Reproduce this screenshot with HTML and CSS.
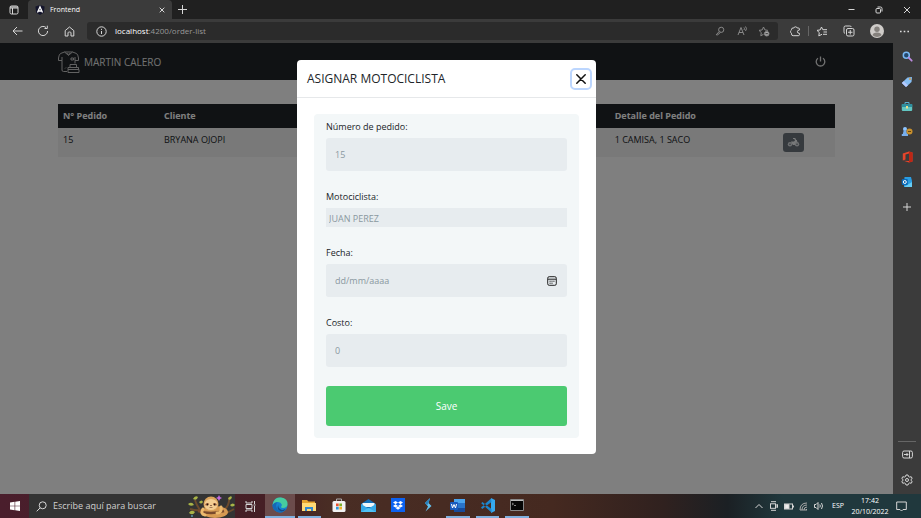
FILE: index.html
```
<!DOCTYPE html>
<html lang="es">
<head>
<meta charset="utf-8">
<title>Frontend</title>
<link rel="stylesheet" href="styles.css">
</head>
<body>
<header class="titlebar">
  <button class="slot slot-28" aria-label="Pestañas"><svg class="icon" width="10" height="10" viewBox="0 0 10 10"><rect x="1" y="1" width="8" height="8" rx="1.5"/><path d="M1 2h8M1 3h8M3.500 3v6"/></svg></button>
  <div class="tab">
    <svg width="10" height="10" viewBox="0 0 10 10"><path d="M5 0l4.600 1.600-.7 6L5 10 1.100 7.600l-.7-6z" fill="#14152b"/><path d="M2.500 7.600L5 1.800l2.500 5.800M3.500 6h3" fill="none" stroke="#fff" stroke-width="1.300"/></svg>
    <span class="tab-title">Frontend</span>
    <button class="slot" aria-label="Cerrar pestaña"><svg class="icon" width="6" height="6" viewBox="0 0 6 6"><path d="M.7.7l4.600 4.600M5.300.7L.7 5.300"/></svg></button>
  </div>
  <button class="slot slot-20" aria-label="Nueva pestaña"><svg class="icon" width="9" height="9" viewBox="0 0 9 9"><path d="M4.500 0v9M0 4.500h9"/></svg></button>
  <div class="window-buttons">
    <button class="slot slot-28" aria-label="Minimizar"><svg class="icon" width="7" height="7" viewBox="0 0 7 7"><path d="M.5 3.500h6"/></svg></button>
    <button class="slot slot-28" aria-label="Restaurar"><svg class="icon" width="8" height="8" viewBox="0 0 8 8"><rect x="1" y="2.500" width="4.500" height="4.500" rx="1"/><path d="M2.500 1h3Q7 1 7 2.500v3"/></svg></button>
    <button class="slot slot-28" aria-label="Cerrar"><svg class="icon" width="8" height="8" viewBox="0 0 8 8"><path d="M1 1l6 6M7 1L1 7"/></svg></button>
  </div>
</header>

<nav class="toolbar" aria-label="Navegación">
  <div class="nav-buttons">
    <button class="slot slot-26" aria-label="Atrás"><svg class="icon" width="11" height="10" viewBox="0 0 11 10"><path d="M10.500 5H1M5 1L1 5l4 4"/></svg></button>
    <button class="slot slot-26" aria-label="Actualizar"><svg class="icon" width="12" height="12" viewBox="0 0 12 12"><path d="M10.600 6A4.600 4.600 0 1 1 9 2.500M10.300.7v2.800H7.500"/></svg></button>
    <button class="slot slot-26" aria-label="Inicio"><svg class="icon" width="11" height="11" viewBox="0 0 11 11"><path d="M1.200 4.600L5.500 1l4.300 3.600V10H7V6.800Q7 6 5.500 6T4 6.800V10H1.200z"/></svg></button>
  </div>
  <div class="address">
    <svg class="icon" width="11" height="11" viewBox="0 0 11 11"><circle cx="5.500" cy="5.500" r="4.700"/><path d="M5.500 5v3M5.500 2.800v1.100"/></svg>
    <span class="url"><b>localhost</b>:4200/order-list</span>
    <button class="slot slot-22 dim" aria-label="Contraseña"><svg class="icon" width="10" height="10" viewBox="0 0 10 10"><circle cx="6.200" cy="3.800" r="2.600"/><path d="M4.200 5.500L1.200 8.800h1.500L5.500 6.400"/></svg></button>
    <button class="slot slot-22 dim" aria-label="Leer en voz alta"><svg class="icon" width="11" height="10" viewBox="0 0 11 10"><path d="M1 9l3-7.500L7 9M2 6.500h4M7 1.500q1 1 0 2.500M8.500.5q2 2 0 4.500"/></svg></button>
    <button class="slot slot-22 dim" aria-label="Agregar a favoritos"><svg class="icon" width="12" height="11" viewBox="0 0 12 11"><path d="M5.500 8.300L2.800 9.800l.5-3.200L1 4.400l3.200-.5L5.500 1l1.400 2.900 3 .5"/><circle cx="8.700" cy="7.700" r="2.300" fill="#aaa"/><path d="M7.500 7.700h2.400" stroke="#333"/></svg></button>
  </div>
  <div class="tools">
    <button class="slot slot-26" aria-label="Extensiones"><svg class="icon" width="11" height="11" viewBox="0 0 11 11"><path d="M9.500 4V3.200Q9.500 2 8.300 2H7.200Q6.800.8 5.500.8T3.800 2H3Q1.500 2 1.500 3.500V4Q.5 4.500.5 5.700T1.500 7.300v.7Q1.500 9.700 3.200 9.700h5.100q1.200 0 1.200-1.200V7.400Q7.400 7.400 7.400 5.700T9.500 4z"/></svg></button>
    <span class="divider"></span>
    <button class="slot slot-26" aria-label="Favoritos"><svg class="icon" width="12" height="11" viewBox="0 0 12 11"><path d="M6 8.300L2.800 9.900l.5-3.300L1 4.400l3.200-.5L5.500 1l1.300 2.700H11M7.500 6H11M7 8.300h4"/></svg></button>
    <button class="slot slot-28" aria-label="Colecciones"><svg class="icon" width="12" height="12" viewBox="0 0 12 12"><rect x="3.500" y="3.500" width="7.500" height="7.500" rx="1.500"/><path d="M2 8.500Q.8 8 1 6.800V2.500Q1 1 2.500 1h4.300Q8 1 8.500 2M7.250 5v4.500M5 7.250h4.500"/></svg></button>
    <button class="slot slot-28" aria-label="Perfil"><svg width="14" height="14" viewBox="0 0 14 14"><circle cx="7" cy="7" r="7" fill="#cfccc9"/><circle cx="7" cy="5.200" r="2.700" fill="#85817d"/><path d="M2.500 11.300Q3 8.500 7 8.500t4.500 2.800Q9.500 13 7 13t-4.500-1.700z" fill="#85817d"/></svg></button>
    <button class="slot slot-26" aria-label="Más"><svg width="9" height="3" viewBox="0 0 9 3"><path d="M0 .7h1.600v1.600H0zM3.700.7h1.600v1.600H3.700zM7.400.7H9v1.600H7.400z" fill="#ddd"/></svg></button>
  </div>
</nav>

<div class="workspace">
  <main class="page">
    <div class="navbar">
      <a class="brand" href="#">
        <svg class="logo" width="24" height="24" viewBox="0 0 24 24"><path d="M7.500 2L3.500 3.500Q2 4.500 1.500 8v2.500h3.500V20q0 1.500 1.500 1.500H10M7.500 2q4 4.500 8 0l4 1.500Q21 4.500 21.500 8v2.500H18v3M7.500 2h8M5 7v3.500M18 7v3.500M9.500 3l2 2.500 2-2.500M13 14.500h6.500v3H13zM11 17.500h10.500v2H11zM11 19.500h11v3H11zM14 8h2.500v2H14zM8 18.500l1-1"/></svg>
        <span>MARTIN CALERO</span>
      </a>
      <button class="slot slot-20" aria-label="Salir"><svg width="11" height="11" viewBox="0 0 11 11" fill="none" stroke="#e6e6e6" stroke-width="1.300"><path d="M3 2.200a4.300 4.300 0 1 0 5 0M5.500.5v5"/></svg></button>
    </div>
    <div class="content">
      <table class="orders">
        <thead><tr><th class="col-id">N° Pedido</th><th class="col-client">Cliente</th><th>Detalle del Pedido</th><th class="col-action"></th></tr></thead>
        <tbody><tr><td>15</td><td>BRYANA OJOPI</td><td>1 CAMISA, 1 SACO</td><td><button class="assign" aria-label="Asignar motociclista"><svg width="13" height="11" viewBox="0 0 13 11"><path d="M4 4.500h3l1-1L7.300 2H6V1h2.200l1 2H10v1.500l1 .5-3 3H6L4.500 6z" fill="#f1f3f5"/><circle cx="3" cy="7.200" r="2.200" fill="#dcdfe2"/><circle cx="10" cy="7.200" r="2.200" fill="#dcdfe2"/><circle cx="3" cy="7.200" r=".8" fill="#6c757d"/><circle cx="10" cy="7.200" r=".8" fill="#6c757d"/></svg></button></td></tr></tbody>
      </table>
    </div>
    <div class="backdrop">
      <section class="modal" role="dialog" aria-labelledby="modal-title">
        <div class="modal-head">
          <h1 id="modal-title">ASIGNAR MOTOCICLISTA</h1>
          <button class="close" aria-label="Cerrar ventana"><svg width="10" height="10" viewBox="0 0 10 10"><path d="M.8.8l8.400 8.400M9.200.8L.8 9.200" stroke="#111" stroke-width="1.500" stroke-linecap="round"/></svg></button>
        </div>
        <div class="modal-body">
          <form class="panel">
            <div class="field"><label for="pedido">Número de pedido:</label><input id="pedido" type="text" value="15"></div>
            <div class="field"><label for="moto">Motociclista:</label><select id="moto"><option>JUAN PEREZ</option></select></div>
            <div class="field"><label for="fecha">Fecha:</label>
              <div class="date"><input id="fecha" type="text" placeholder="dd/mm/aaaa"><button type="button" class="slot" aria-label="Calendario"><svg width="10" height="10" viewBox="0 0 10 10" fill="none" stroke="#222"><rect x=".7" y=".7" width="8.600" height="8.600" rx="1.500"/><path d="M1 3.200h8M2.500 5.200h1.200M4.400 5.200h1.200M6.300 5.200h1.200M2.500 7.200h1.200M4.400 7.200h1.200"/></svg></button></div>
            </div>
            <div class="field"><label for="costo">Costo:</label><input id="costo" type="text" value="0"></div>
            <button type="button" class="save">Save</button>
          </form>
        </div>
      </section>
    </div>
  </main>

  <aside class="sidebar">
    <button class="slot" aria-label="Buscar"><svg width="11" height="11" viewBox="0 0 11 11"><circle cx="4.300" cy="4.300" r="3" fill="#24466b" stroke="#79b8f3" stroke-width="1.500"/><path d="M6.700 6.700L9.700 9.700" stroke="#bd8be0" stroke-width="1.800" stroke-linecap="round"/></svg></button>
    <button class="slot" aria-label="Compras"><svg width="12" height="12" viewBox="0 0 12 12"><path d="M6.500 1.500L11 1l-.5 5L5 11 .8 7z" fill="#86bdf2"/><path d="M.8 7L5 11l2-1.700L2.700 5.200z" fill="#b5c9ff"/><circle cx="9" cy="3" r=".9" fill="#d99a30"/></svg></button>
    <button class="slot" aria-label="Herramientas"><svg width="12" height="11" viewBox="0 0 12 11"><path d="M4 3V1.500h4V3" fill="none" stroke="#5baed0"/><rect x=".8" y="3" width="10.400" height="7" rx="1" fill="#62c6c2"/><path d="M.8 3h10.400v3H.8z" fill="#2f8f9f"/><path d="M5 5h2v2.500H5z" fill="#eadf8c"/></svg></button>
    <button class="slot" aria-label="Juegos"><svg width="12" height="11" viewBox="0 0 12 11"><circle cx="4" cy="3" r="2" fill="#8ec5ff"/><path d="M2.800 4h2.500L6 8h1v2H.8V8h1z" fill="#78aeea"/><circle cx="8.500" cy="5.500" r="3" fill="#c8902d"/><path d="M7 5.500h3" stroke="#654510"/></svg></button>
    <button class="slot" aria-label="Office"><svg width="11" height="12" viewBox="0 0 11 12"><path d="M7 .5l3.500 1v9L7 11.500 1.500 9.700 7 10V2.500L3.500 3.500v5L.8 9.500v-7z" fill="#e6452b"/><path d="M7 .5l3.500 1v9L7 11.500z" fill="#bd2615"/></svg></button>
    <button class="slot" aria-label="Outlook"><svg width="12" height="12" viewBox="0 0 12 12"><path d="M3.500 1H10l1 4v6H3z" fill="#2a9de2"/><path d="M3 11l8-5v5z" fill="#66cdf5"/><rect x=".8" y="3" width="6" height="6" rx="1" fill="#0869b8"/><circle cx="3.800" cy="6" r="1.500" fill="none" stroke="#fff"/></svg></button>
    <button class="slot" aria-label="Agregar"><svg class="icon" width="8" height="8" viewBox="0 0 8 8"><path d="M4 0v8M0 4h8"/></svg></button>
    <div class="sidebar-end">
      <button class="slot" aria-label="Ocultar barra"><svg class="icon" width="11" height="9" viewBox="0 0 11 9"><rect x=".6" y="1" width="9.800" height="7" rx="1.500"/><path d="M7.500 1v7M2 4.500h4M4.500 3L6 4.500 4.500 6"/></svg></button>
      <button class="slot" aria-label="Configuración"><svg class="icon" width="12" height="12" viewBox="0 0 12 12"><path d="M5 1h2l.5 1.500 1.200.6L10.200 2.700l1 1.800L10 5.500v1l1.200 1-1 1.800-1.500-.4-1.200.7L7 11H5l-.5-1.400-1.200-.7-1.500.4-1-1.800L2 6.500v-1l-1.200-1 1-1.800 1.500.4 1.200-.6z"/><circle cx="6" cy="6" r="1.500"/></svg></button>
    </div>
  </aside>
</div>

<footer class="taskbar">
  <button class="slot start" aria-label="Inicio de Windows"><svg width="10" height="10" viewBox="0 0 10 10"><path d="M0 1.400l4.600-.6v3.900H0zM5.200.7L10 0v4.700H5.200zM0 5.300h4.600v3.900L0 8.600zM5.200 5.300H10V10l-4.800-.7z" fill="#fff"/></svg></button>
  <label class="search">
    <svg class="icon" width="11" height="11" viewBox="0 0 11 11"><circle cx="6.700" cy="4.300" r="3.500"/><path d="M4.200 6.800L.7 10.300"/></svg>
    <input type="text" aria-label="Buscar en el equipo" placeholder="Escribe aquí para buscar">
    <svg width="47" height="23" viewBox="0 0 47 23"><path d="M2 14q6 2 12 1M12 15Q8 9 7 5M36 15q6-5 5-13M34 18q6 0 12-4" fill="none" stroke="#6b4a2c" stroke-width="2"/><path d="M0 9q4-3 6 1-4 2-6-1zM5 4q2-4 5-2-1 4-5 2zM1 18q2-4 6-1-2 4-6 1zM11 7q3-3 4 0-2 3-4 0zM40 4q2-4 4-2-1 4-4 2zM42 10q3-3 5 0-3 3-5 0z" fill="#a9b447"/><ellipse cx="27" cy="17" rx="13" ry="6" fill="#d79a52"/><circle cx="23" cy="9" r="7.500" fill="#dba45c"/><ellipse cx="23" cy="9.500" rx="6.500" ry="5.500" fill="#f3cd92"/><path d="M17 10q1-3 4-1.500-1 3-4 1.500zM25 8.500q3-1.500 4 1.500-3 1.500-4-1.500z" fill="#a9683f"/><circle cx="19.500" cy="9.500" r=".9" fill="#241510"/><circle cx="26.500" cy="9.500" r=".9" fill="#241510"/><path d="M22 10h2l-1 1.200zM21 12.500q2 1.200 4 0" fill="#5b2c20"/><path d="M10 16q13 4 26 0" fill="none" stroke="#7a4a2c" stroke-width="2.500"/><path d="M15 14q-3 5 2 6M33 12q1 6-4 6" stroke="#edba6e" stroke-width="3" stroke-linecap="round" fill="none"/><path d="M31 0l1 2 2 1-2 1-1 2-1-2-2-1 2-1z" fill="#c36de1"/><path d="M3 21l1-1 1 1-1 1z" fill="#6fc5e8"/></svg>
  </label>
  <button class="slot slot-30" aria-label="Vista de tareas"><svg class="icon" width="11" height="11" viewBox="0 0 11 11"><path d="M1 0v2h6V0M1 11V9h6v2M1 3.500h6v4H1zM9.500 0v3M9.500 5v6M8.500 4h2"/></svg></button>
  <div class="apps">
    <button class="app open active" aria-label="Edge"><svg width="16" height="16" viewBox="0 0 16 16"><circle cx="8" cy="8" r="7.500" fill="#1683cf"/><path d="M1 6Q3 0 9 .6q7 1 6.500 7-.5 3.400-4.500 3.400-2 0-2-1 1-1 .8-2.400Q9 5 6 5 2.500 5 .6 8z" fill="#46cda0"/><path d="M.6 8Q2 5 5.500 5.200 3 8 5 11.500q2 3.500 6 3.400Q8 16.300 4.500 14.500 0 12 .6 8z" fill="#1668b5"/><path d="M6.500 7Q5.500 10 8 12t6-.2Q12 15 9 14.500 4 13 6.500 7z" fill="#134b8c"/></svg></button>
    <button class="app open" aria-label="Explorador"><svg width="14" height="13" viewBox="0 0 14 13"><path d="M0 1h5l1.500 1.500H13V12H0z" fill="#e5a52e"/><path d="M0 4h14v8H0z" fill="#ffdb75"/><path d="M3 12V8h8v4H9v-2H5v2z" fill="#318bd0"/></svg></button>
    <button class="app" aria-label="Store"><svg width="14" height="14" viewBox="0 0 14 14"><path d="M4.500 4V1h5v3" fill="none" stroke="#aaa"/><rect x=".5" y="3" width="13" height="11" rx="1.500" fill="#f2f2f2"/><path d="M4 5.500h2.700v2.700H4z" fill="#e8502d"/><path d="M7.300 5.500H10v2.700H7.300z" fill="#7aaf2a"/><path d="M4 8.800h2.700v2.700H4z" fill="#2c99dc"/><path d="M7.300 8.800H10v2.700H7.300z" fill="#efb12b"/></svg></button>
    <button class="app" aria-label="Correo"><svg width="15" height="13" viewBox="0 0 15 13"><path d="M0 5l7.500-5L15 5v8H0z" fill="#156fb6"/><path d="M1.500 4h12v4h-12z" fill="#f0f7fb"/><path d="M0 5l7.500 4.500L15 5v8H0z" fill="#35a9e8"/><path d="M0 13l7.500-4 7.500 4z" fill="#50c2f5"/></svg></button>
    <button class="app" aria-label="Dropbox"><svg width="14" height="14" viewBox="0 0 14 14"><path d="M0 0h14v14H0z" fill="#0d62f0"/><path d="M4.500 3L7 4.600 4.500 6.200 2 4.600zM9.500 3L12 4.600 9.500 6.200 7 4.600zM4.500 6.300L7 7.900 4.500 9.500 2 7.900zM9.500 6.300L12 7.900 9.500 9.500 7 7.900zM7 8.500l2.500 1.600L7 11.700l-2.500-1.600z" fill="#fff"/></svg></button>
    <button class="app" aria-label="Streamlabs"><svg width="10" height="14" viewBox="0 0 10 14"><path d="M7 0L2 5l3 3.500-2.500 5L8.500 8 5.500 5z" fill="#65c0ed"/><path d="M7 0L2 5l2 2.200L5.500 5z" fill="#2881bd"/></svg></button>
    <button class="app open" aria-label="Word"><svg width="15" height="13" viewBox="0 0 15 13"><rect x="4" width="11" height="13" rx="1" fill="#2974ca"/><path d="M4 0h11v4H4z" fill="#4ba5ee"/><path d="M4 9h11v4H4z" fill="#164b9c"/><rect y="3" width="8" height="8" rx="1" fill="#185abd"/><path d="M1.500 5l1 4L4 5.500 5.500 9l1-4" fill="none" stroke="#fff"/></svg></button>
    <button class="app open" aria-label="Visual Studio Code"><svg width="15" height="15" viewBox="0 0 15 15"><path d="M11 0l4 2v11l-4 2z" fill="#36a9ee"/><path d="M11 .5L1 9.500l1.200 1.600L11.500 4M1.200 5.300l1.200-1.400L11.500 11v3.500z" fill="#1b86ce"/></svg></button>
    <button class="app open" aria-label="Consola"><svg width="14" height="12" viewBox="0 0 14 12"><path d="M.5.500h13v11H.5z" fill="#060606" stroke="#888"/><path d="M1 1.500h12" stroke="#bbb"/><path d="M2 4l1.500 1L2 6M4 6.500h2" fill="none" stroke="#bbb" stroke-width=".7"/></svg></button>
  </div>
  <div class="tray">
    <button class="slot slot-15" aria-label="Mostrar iconos"><svg class="icon" width="8" height="6" viewBox="0 0 8 6"><path d="M.5 5L4 1.500 7.500 5"/></svg></button>
    <button class="slot slot-15" aria-label="Reunirse"><svg class="icon" width="8" height="10" viewBox="0 0 8 10"><rect x=".5" y="2.800" width="5" height="4.500"/><path d="M5.500 4.500l2-1v3l-2-1M1 .7h5M1 9.300h5"/></svg></button>
    <button class="slot slot-15" aria-label="Batería"><svg class="icon" width="10" height="7" viewBox="0 0 10 7"><rect x=".5" y="1" width="8" height="5"/><path d="M9.500 2.500v2"/><path d="M1 1.500h4v4H1z" fill="#eee"/></svg></button>
    <button class="slot slot-15" aria-label="Red"><svg class="icon" width="9" height="9" viewBox="0 0 9 9"><path d="M1 8q0-7 7-7M3 8q0-5 5-5M5 8q0-3 3-3M7 8l1-1M1 8h7" stroke="#aaa"/></svg></button>
    <button class="slot slot-15" aria-label="Volumen"><svg class="icon" width="10" height="8" viewBox="0 0 10 8"><path d="M.5 2.500h1.500l2-2v7l-2-2H.5zM5.800 2.500q1 1.500 0 3M7.500 1q2 3 0 6"/></svg></button>
    <span class="lang">ESP</span>
    <div class="clock"><span>17:42</span><span>20/10/2022</span></div>
    <button class="slot slot-22" aria-label="Notificaciones"><svg class="icon" width="11" height="11" viewBox="0 0 11 11"><path d="M.7 1h9.600v7.500H7L5.500 10 4 8.500H.7z"/></svg></button>
  </div>
</footer>
</body>
</html>
```
FILE: styles.css
```
* { box-sizing: border-box; }
body {
  margin: 0;
  height: 100vh;
  display: flex;
  flex-direction: column;
  overflow: hidden;
  font: 9px/14px "Open Sans", "Noto Sans", sans-serif;
  color: #212529;
}
button {
  padding: 0;
  border: 0;
  background: none;
  font: inherit;
  color: inherit;
}
input, select { font: inherit; min-width: 0; border: 0; }
svg { display: block; flex: none; }
.icon { fill: none; stroke: #d6d6d6; stroke-width: 1; }
.dim .icon { stroke: #888; }
.slot { display: flex; flex: none; align-items: center; justify-content: center; }
.slot-15 { width: 15px; }
.slot-20 { width: 20px; }
.slot-22 { width: 22px; }
.slot-26 { width: 26px; }
.slot-28 { width: 28px; }
.slot-30 { width: 30px; }

.titlebar { display: flex; flex: none; height: 19px; background: #202020; color: #fff; }
.tab {
  width: 144px;
  display: flex;
  align-items: center;
  gap: 5px;
  padding: 0 7px;
  border-radius: 4px 4px 0 0;
  background: #3b3b3b;
  font-size: 7px;
}
.tab-title { flex: 1; }
.window-buttons { display: flex; margin-left: auto; }

.toolbar {
  display: flex;
  flex: none;
  align-items: center;
  height: 24px;
  padding-left: 4px;
  background: #3b3b3b;
}
.nav-buttons { display: flex; width: 83px; }
.address {
  flex: 1;
  display: flex;
  align-items: center;
  height: 18px;
  padding: 0 3px 0 9px;
  border-radius: 3px;
  background: #2b2b2b;
}
.url { flex: 1; padding-left: 8px; font-size: 8px; color: #989898; }
.url b { font-weight: 400; color: #fff; }
.tools { display: flex; align-items: center; padding: 0 4px; }
.divider { width: 1px; height: 10px; background: #666; }

.workspace { flex: 1; min-height: 0; display: flex; }
.page { position: relative; flex: 1; background: #fff; }
.navbar {
  display: flex;
  align-items: center;
  justify-content: space-between;
  height: 37px;
  padding: 0 63px 0 57px;
  background: #212529;
}
.brand { display: flex; align-items: center; gap: 3px; color: #e4e4e4; text-decoration: none; font-size: 10px; }
.logo { fill: none; stroke: #c4c4c4; stroke-width: 1; }
.content { padding: 24px 58px; }
.orders { width: 100%; border-collapse: collapse; table-layout: fixed; }
.orders th, .orders td { padding: 5px; text-align: left; vertical-align: top; }
.orders th { background: #212529; color: #fff; font-size: 9px; font-weight: 700; }
.orders td { background: #f2f2f2; }
.col-id { width: 13%; }
.col-client { width: 58%; }
.col-action { width: 57px; }
.assign {
  display: flex;
  align-items: center;
  justify-content: center;
  width: 21px;
  height: 19px;
  border-radius: 3px;
  background: #6c757d;
}

.backdrop {
  position: absolute;
  inset: 0;
  display: flex;
  align-items: flex-start;
  justify-content: center;
  padding-top: 17px;
  background: rgba(0, 0, 0, .5);
}
.modal { width: 299px; border-radius: 4px; background: #fff; }
.modal-head {
  display: flex;
  align-items: center;
  justify-content: space-between;
  height: 38px;
  padding: 0 4px 0 10px;
  border-bottom: 1px solid #e6e8ea;
}
.modal-head h1 { margin: 0; font-size: 12px; line-height: 16px; font-weight: 500; }
.close {
  display: flex;
  align-items: center;
  justify-content: center;
  width: 22px;
  height: 22px;
  border: 2px solid #bcd6fe;
  border-radius: 5px;
}
.modal-body { padding: 16px 17px; }
.panel {
  display: flex;
  flex-direction: column;
  gap: 19px;
  padding: 6px 12px 12px;
  border-radius: 4px;
  background: #f3f7f8;
}
.field { display: flex; flex-direction: column; gap: 4px; }
.field input {
  width: 100%;
  height: 33px;
  padding: 0 9px;
  border-radius: 3px;
  background: #e7ecef;
  color: #8a98a0;
}
.field select {
  height: 19px;
  padding: 2px 3px 0;
  appearance: none;
  background: #e7ecef;
  color: #8a98a0;
}
.field input::placeholder { color: #8a98a0; }
.date { display: flex; align-items: center; padding-right: 10px; border-radius: 3px; background: #e7ecef; }
.save { height: 40px; border-radius: 3px; background: #4bca71; color: #fff; font-size: 10px; }

.sidebar { display: flex; flex-direction: column; width: 28px; padding: 1px 0 2px; background: #3b3b3b; }
.sidebar .slot { height: 25px; }
.sidebar-end { margin: auto 5px 0; border-top: 1px solid #666; }
.sidebar-end .slot { width: 18px; }

.taskbar {
  display: flex;
  flex: none;
  height: 24px;
  color: #fff;
  background: linear-gradient(90deg, #4a1e2c 0%, #451f25 29%, #492d24 36%, #452920 60%, #30211f 72%, #1b2024 79%, #20383d 85%, #20383d 100%);
}
.start { width: 29px; }
.search { display: flex; align-items: center; width: 206px; padding-left: 7px; background: #333; }
.search input { flex: 1; padding: 0 0 0 6px; background: none; color: #fff; }
.search input::placeholder { color: #d0d0d0; }
.apps { display: grid; grid-template-columns: repeat(9, 1fr); width: 267px; }
.app { display: flex; align-items: center; justify-content: center; border-bottom: 2px solid transparent; }
.open { border-color: #7fb0df; }
.active { background: #6b4c4c; }
.app:not(.active) { margin: 0 3px; }
.tray { display: flex; margin-left: auto; padding-right: 9px; }
.lang { width: 24px; align-self: center; text-align: center; font-size: 7px; }
.clock {
  display: flex;
  flex-direction: column;
  justify-content: center;
  width: 40px;
  text-align: center;
  font-size: 7px;
  line-height: 11px;
}
```
